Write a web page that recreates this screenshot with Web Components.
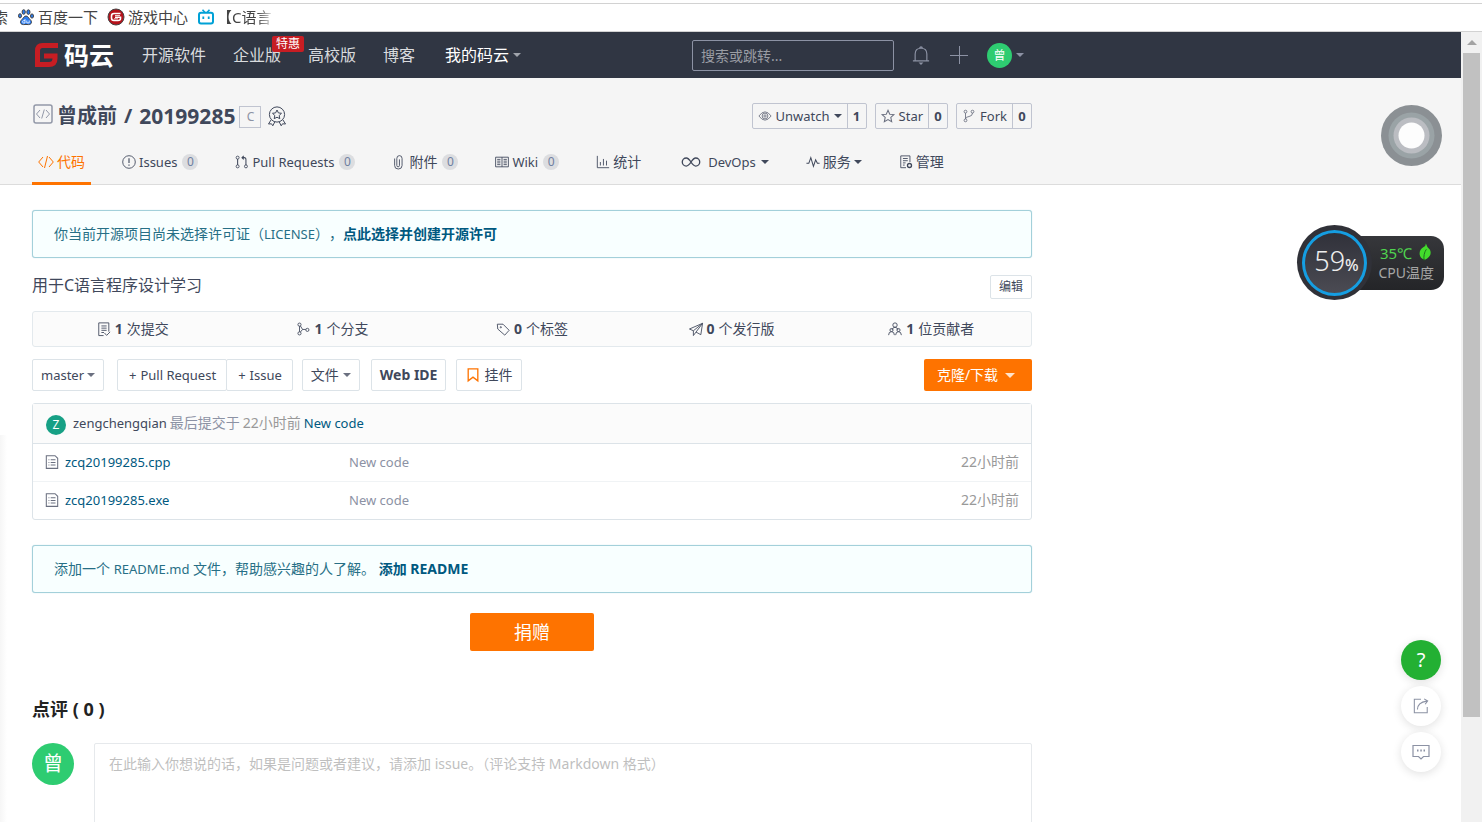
<!DOCTYPE html>
<html lang="zh-CN">
<head>
<meta charset="utf-8">
<title>曾成前/20199285 - 码云</title>
<style>
html, body { margin: 0; height: 100%; }
body {
  overflow: hidden;
  background: #fff;
  color: #40485b;
  font: 14px/20px "Noto Sans", "Noto Sans CJK SC", sans-serif;
  --ink: #40485b;
  --muted: #8c92a4;
  --line: #dce3e8;
  --orange: #fe7300;
  --link: #005980;
}
</style>
</head>
<body>
<browser-frame>
  <site-nav></site-nav>
  <repo-header></repo-header>
  <repo-main></repo-main>
</browser-frame>

<script>
const base = `
*{box-sizing:border-box}
:host{display:block;box-sizing:border-box}
a{color:inherit;text-decoration:none}
button,input,textarea,select{font:inherit;color:inherit;margin:0;border-radius:2px}
button{cursor:pointer;white-space:nowrap}
.en{font-size:13px}
.caret{flex:none;display:inline-block;width:0;height:0;border:4px solid transparent;border-top-color:currentColor;border-bottom:0}
`;
function define(name, css, html) {
  customElements.define(name, class extends HTMLElement {
    constructor() {
      super();
      this.attachShadow({ mode: 'open' }).innerHTML = `<style>${base}${css}</style>${html}`;
    }
  });
}

const icons = {
  logo: [24, '<path d="M24 2.500H8.500Q3.500 2.500 3.500 8v13.500H15q6 0 6-6V13H10" fill="none" stroke="#c71d23" stroke-width="5"/>'],
  paw: [16, '<g fill="#2b7cf0"><ellipse cx="5.700" cy="3" rx="1.600" ry="2.300"/><ellipse cx="10.400" cy="3.100" rx="1.600" ry="2.300"/><ellipse cx="2" cy="6.800" rx="1.500" ry="2.100"/><ellipse cx="14" cy="7" rx="1.500" ry="2.100"/><path d="M8 7c2 0 2.400 2 4 3.400 3 2.600 1 5.400-1.500 5.200-1.700-.2-3.300-.2-5 0C3 15.800 1 13 4 10.400 5.600 9 6 7 8 7z"/></g><path d="M7 10v4H5.600q-1 0-1-1.200t1-1.200H7M8.800 11.500v2.400h2.400v-2.400" fill="none" stroke="#fff" stroke-width=".8"/>'],
  game: [16, '<circle cx="8" cy="8" r="8" fill="#b5121b"/><path d="M12.500 4.500H6Q3.500 4.500 3.500 7v2Q3.500 11.500 6 11.500h4q2.500 0 2.500-2V8.200H7" fill="none" stroke="#fff" stroke-width="1.600"/><path d="M7 6.500h5M6 9.800h4" stroke="#fff" stroke-width=".8"/>'],
  tv: [16, '<path d="M4.500.8 7 3.500M11.500.8 9 3.500" stroke="#00a1d6" stroke-width="1.600"/><rect x="1" y="3.800" width="14" height="10.700" rx="2" fill="none" stroke="#00a1d6" stroke-width="2"/><path d="M5.300 7.500v2.500M10.700 7.500v2.500" stroke="#00a1d6" stroke-width="1.800"/>'],
  bell: [20, '<path d="M1 16.500h18M3.500 16.500V9q0-6.500 6.500-6.500T16.500 9v7.500M8.500 2.500a1.500 1.500 0 0 1 3 0" stroke-width="1.300"/><path d="M7.300 18.300h5.400L10 21z" fill="currentColor" stroke="none"/>'],
  plus: [18, '<path d="M9.500 0v18M0 9.500h18"/>'],
  repo: [20, '<rect x="1" y="1" width="18" height="18" rx="2" stroke-width="1.500"/><path d="m7 6-3.500 4L7 14M13 6l3.500 4-3.500 4M11.300 5.500l-2.600 9"/>'],
  medal: [20, '<circle cx="10" cy="8.500" r="7.600"/><path d="m10 4 1.400 2.900 3.100.4-2.300 2.200.6 3.200L10 11.200l-2.800 1.500.6-3.200-2.300-2.200 3.100-.4zM4 14l-2.500 4 3-.2 1.300 2 2-4M16 14l2.500 4-3-.2-1.300 2-2-4"/>'],
  eye: [16, '<path d="M1 8q7-9.500 14 0-7 9.500-14 0z"/><circle cx="8" cy="8" r="3.300"/><circle cx="8" cy="8" r="1.300"/>'],
  star: [16, '<path d="m8 1.500 2 4.400 4.700.5-3.500 3.200 1 4.800L8 12l-4.200 2.400 1-4.800L1.300 6.400 6 5.900z" stroke-width="1.200"/>'],
  fork: [16, '<circle cx="4" cy="3" r="1.600"/><circle cx="4" cy="13" r="1.600"/><circle cx="12" cy="3" r="1.600"/><path d="M4 4.600v6.800M12 4.600q0 3.400-4 4-4 .4-4 2.800"/>'],
  code: [16, '<path d="m5 3-4.300 5L5 13M11 3l4.300 5-4.300 5M9.500 2l-3 12"/>'],
  issue: [16, '<circle cx="8" cy="8" r="7.200"/><path d="M8 3.800v5.400M8 10.800v1.500" stroke-width="1.300"/>'],
  pull: [16, '<circle cx="3" cy="3" r="1.700"/><circle cx="3" cy="13" r="1.700"/><circle cx="12.500" cy="13" r="1.700"/><path d="M3 4.700v6.600M12.500 11.300V5q0-2-2-2H8m2-2L8 3l2 2" stroke-width="1.200"/>'],
  clip: [16, '<path d="M8.500 5v7q0 1.500-1.500 1.500T5.500 12V4q0-3.300 3-3.300t3 3.300v8q0 4-4.300 4T3 12V4"/>'],
  book: [16, '<path d="M.7 2.500h14.600v11H.7zM8 2.500v11M2.500 5h3.700M2.500 7h3.700M2.500 9h3.700M2.500 11h3.700M9.800 5h3.700M9.800 7h3.700M9.800 9h3.700M9.800 11h3.700"/>'],
  chart: [16, '<path d="M1.500 1v13.500H15M5 12V8M8.500 12V4.500M12 12V6.500"/>'],
  loop: [20, '<path d="M10 10C7 5.500 5.500 5.500 4.800 5.500a4.500 4.500 0 0 0 0 9C7 14.500 8 13 10 10s3-4.500 5.200-4.500a4.500 4.500 0 0 1 0 9C13 14.500 12 13 10 10z" stroke-width="1.500"/>'],
  pulse: [16, '<path d="M.5 9.500h2.700L5.500 3l3 10L11 5.500l2 4h2.500" stroke-width="1.200"/>'],
  manage: [16, '<path d="M8 14.500H2V1h10.500v7M4.500 4h5.500M4.500 6.500h5.500M4.500 9h3M4.500 11.500h2"/><circle cx="12" cy="12" r="2.300" stroke-width="1.500"/>'],
  commits: [16, '<path d="M7.500 15.500H2V1h11.500V11M5 4.500h6M5 7h6M5 9.500h6M5 12h3M8.500 12.500l2.500 2.800 4-4"/>'],
  branch: [16, '<circle cx="4" cy="3" r="1.800"/><circle cx="4" cy="13" r="1.800"/><circle cx="13" cy="9" r="1.800"/><path d="M4 4.800v6.400M5 4.500l2.500 4h3.700M7.500 8.500 5 11.500"/>'],
  tag: [16, '<path d="M1.500 2.500h6.500l7 7-5 5.500-8-7z"/><circle cx="5.500" cy="6" r=".7"/>'],
  plane: [16, '<path d="M15.500 1.500.5 8 5 10zM15.500 1.500l-2 13-5.500-3zM5 10v5.500L8 11.500"/>'],
  people: [16, '<circle cx="8" cy="3.500" r="2.500"/><path d="M4.500 9q1-3 3.500-3t3.500 3M.7 15q0-4 3.300-4t3.300 4M8.700 15Q9 11 12 11t3.300 4"/><circle cx="4" cy="9.200" r="1.800"/><circle cx="12" cy="9.200" r="1.800"/>'],
  mark: [16, '<path d="M2.500 1h11v13.700L8 10.500l-5.500 4.200z" stroke-width="1.500"/>'],
  file: [16, '<path d="M1.500.8h10l3 3v11.500h-13zM6.500 5.500H12M6.500 8.500H12M6.500 11.500H12M4 5.500h1M4 8.500h1M4 11.500h1" stroke-width="1.200"/>'],
  share: [18, '<path d="M9 1.500H1.500v15h14.500V10M5 13q0-8 10.500-9.500M12.500 1l4 2.300-2.800 3.700" stroke-width="1.200"/>'],
  chat: [18, '<path d="M1 2.500h16v11h-5.500l-2.500 2.500-2.500-2.500H1z" stroke-width="1.200"/><path d="M5 7.500h1.500M8.300 7.500h1.500M11.500 7.500H13" stroke-width="1.800"/>'],
  leaf: [20, '<path d="M11 .5q1 4 4.500 7 3 7-5.500 11-6-1-6-7Q4 7 8.500 4.500 11 3 11 .5z" fill="#43dc2c" stroke="none"/><path d="M11.500 7Q8 12 9 19.500" stroke="#17651b"/>']
};
customElements.define('line-icon', class extends HTMLElement {
  connectedCallback() {
    if (this.shadowRoot) return;
    const [box, art] = icons[this.getAttribute('name')];
    const size = this.getAttribute('size') || 16;
    this.attachShadow({ mode: 'open' }).innerHTML = `
      <style>:host{display:inline-block;flex:none;width:${size}px;height:${size}px}svg{display:block;overflow:visible}</style>
      <svg width="${size}" height="${size}" viewBox="0 0 ${box} ${box}" fill="none" stroke="currentColor" stroke-width="1" aria-hidden="true">${art}</svg>`;
  }
});

define('bookmark-bar', `
:host{height:32px;padding-top:3px;overflow:hidden;background:#fff}
nav{display:flex;align-items:center;height:29px;padding-bottom:1px;border-top:1px solid #d2d2d2;border-bottom:1px solid #d2d2d2;color:#444;font-size:15px;white-space:nowrap}
a{display:flex;align-items:center;gap:4px;margin-right:10px}
a:first-child{width:8px;justify-content:flex-end}
a:last-child{gap:3px}
.fade{width:58px;overflow:hidden;-webkit-mask-image:linear-gradient(90deg,#000 70%,transparent)}
`, `<nav aria-label="书签">
<a href="#">索</a>
<a href="#"><line-icon name="paw"></line-icon>百度一下</a>
<a href="#"><line-icon name="game"></line-icon>游戏中心</a>
<a href="#"><line-icon name="tv"></line-icon><span class="fade">【C语言</span></a></nav>`);

define('browser-frame', `
:host{display:flex;flex-direction:column;height:100vh;position:relative}
.view{flex:1;min-height:0;display:flex}
.page{flex:1;min-width:0;overflow:hidden}
.bar{width:21px;background:#f1f1f1;padding:0 2px;display:flex;flex-direction:column;align-items:center}
.up{height:21px;display:flex;align-items:center}
.up i{border:5px solid transparent;border-bottom-color:#a3a3a3;border-top:0}
.thumb{width:17px;height:84%;background:#c1c1c1}
.edge{position:absolute;left:0;top:435px;bottom:0;width:7px;background:linear-gradient(90deg,#f6f6f6,#fff)}
cpu-meter,focus-ring,side-tools{position:absolute}
focus-ring{right:40px;top:105px}
cpu-meter{right:38px;top:225px}
side-tools{right:41px;top:640px}
`, `<bookmark-bar></bookmark-bar>
<div class="view"><div class="page"><slot></slot></div>
<div class="bar"><div class="up"><i></i></div><div class="thumb"></div></div></div>
<div class="edge"></div><focus-ring></focus-ring><cpu-meter></cpu-meter><side-tools></side-tools>`);

define('focus-ring', ``, `<svg width="61" height="61" viewBox="0 0 61 61" style="display:block" aria-hidden="true">
<circle cx="30.500" cy="30.500" r="30.500" fill="#8b9094"/><circle cx="30.500" cy="30.500" r="23" fill="#9aa3a6"/><circle cx="30.500" cy="30.500" r="18" fill="#bbbdc2"/><circle cx="30.500" cy="30.500" r="13" fill="#fdfdfd"/></svg>`);

define('cpu-meter', `
:host{display:flex;align-items:center}
.dial{position:relative;z-index:1;display:flex;align-items:center;justify-content:center;width:75px;height:75px;border-radius:50%;background:#303138;padding:5px}
.ring{display:flex;align-items:baseline;justify-content:center;width:66px;height:66px;padding-left:4px;border:3px solid #159ee2;border-radius:50%;background:linear-gradient(#30313a,#4b4b53);color:#eee;font-size:27px;line-height:56px;font-weight:300}
.ring small{font-size:16px;font-weight:500}
.info{margin-left:-20px;width:92px;height:54px;border-radius:0 13px 13px 0;background:linear-gradient(#36373b,#242528);padding:7px 10px 0 0;display:flex;flex-direction:column;align-items:flex-end;color:#a6a6a6;line-height:20px}
.temp{display:flex;gap:4px;color:#4fd44f;font-size:15px}
`, `<div class="dial"><div class="ring">59<small>%</small></div></div>
<div class="info"><span class="temp">35℃<line-icon name="leaf" size="18"></line-icon></span><span>CPU温度</span></div>`);

define('side-tools', `
:host{display:flex;flex-direction:column;gap:6px}
button{display:flex;align-items:center;justify-content:center;width:40px;height:40px;padding:0;border:0;border-radius:50%;background:#fff;color:#8c92a4;box-shadow:0 2px 10px rgba(0,0,0,.12)}
.help{background:#23b033;color:#fff;font-size:20px}
`, `<button class="help">?</button>
<button aria-label="分享"><line-icon name="share"></line-icon></button>
<button aria-label="反馈"><line-icon name="chat" size="18"></line-icon></button>`);

define('site-nav', `
:host{background:#303643;color:#d9dbde}
.in{display:flex;align-items:center;max-width:1064px;height:46px;padding:0 40px 0 34px;font-size:16px}
.logo{display:flex;align-items:center;gap:6px;color:#fff;font-size:25px;font-weight:700;line-height:46px;margin-right:28px}
nav{display:flex;gap:27px;white-space:nowrap}
nav a{position:relative;line-height:46px}
.mine{display:flex;align-items:center;gap:4px;color:#fff;margin-left:3px}
.mine .caret{color:#a0a4ac}
.hot{position:absolute;left:39px;top:4px;width:32px;height:16px;border-radius:2px;background:#c71d23;color:#fff;font-size:12px;line-height:16px;text-align:center}
input{width:202px;height:31px;margin-left:auto;padding:0 8px;border:1px solid #8c92a4;background:transparent;font-size:14px;outline:0}
input::placeholder{color:#9a9da4;opacity:1}
button{display:flex;align-items:center;border:0;background:none;padding:0;color:#8c92a4}
.bell{margin-left:18px}.plus{margin-left:20px}
.me{margin-left:19px;gap:4px}
.me b{width:25px;height:25px;border-radius:50%;background:#2ecc71;color:#fff;font-size:12px;line-height:25px;font-weight:400}
`, `<div class="in"><a class="logo" href="#"><line-icon name="logo" size="24"></line-icon>码云</a>
<nav><a href="#">开源软件</a><a href="#">企业版<span class="hot">特惠</span></a><a href="#">高校版</a><a href="#">博客</a><a class="mine" href="#">我的码云<i class="caret"></i></a></nav>
<input type="text" placeholder="搜索或跳转..." aria-label="搜索或跳转">
<button class="bell" aria-label="通知"><line-icon name="bell" size="18"></line-icon></button>
<button class="plus" aria-label="新建"><line-icon name="plus" size="18"></line-icon></button>
<button class="me"><b>曾</b><i class="caret"></i></button></div>`);

define('count-button', `
:host{display:flex;height:26px;border:1px solid #c0c4d0;border-radius:2px;line-height:24px;font-size:13px}
button{display:flex;align-items:center;gap:4px;border:0;background:none;padding:0 5px}
a{width:19px;border-left:1px solid #c0c4d0;text-align:center;font-weight:700}
`, `<button><slot></slot></button><a href="#"><slot name="count"></slot></a>`);

define('repo-tab', `
:host([active]){--tab:var(--orange)}
a{display:flex;align-items:center;gap:3px;height:45px;padding:2px 6px 0;border-bottom:3px solid transparent;color:var(--tab,var(--ink));white-space:nowrap}
:host([active]) a{border-color:var(--orange)}
`, `<a href="#"><slot></slot></a>`);

define('repo-header', `
:host{background:#f5f5f5;border-bottom:1px solid #dcdcdc}
.in{max-width:1064px;padding:0 32px}
.top{display:flex;align-items:center;height:62px;padding-top:14px}
h1{display:flex;align-items:center;margin:0;font-size:20px;line-height:26px}
h1 line-icon{margin:0 4px 5px 1px;color:#9298a8}
.slash{margin:0 7px}
.num{font-size:21px}
.lang{width:22px;height:22px;margin:2px 6px 0 4px;border:1px solid #c0c4d0;color:#8c92a4;font-size:12px;line-height:20px;text-align:center}
.acts{display:flex;gap:8px;margin-left:auto}
.acts line-icon{color:#6b7080}
.tabs{display:flex;gap:25px;margin-bottom:-1px}
.n{min-width:16px;height:16px;margin-left:2px;border-radius:8px;background:#dcdde0;color:#7080a0;font-size:12px;line-height:16px;text-align:center}
.ops{margin:0 2px 0 5px}
.loop{margin-left:4px}
`, `<div class="in"><div class="top"><h1><line-icon name="repo" size="20"></line-icon><a href="#">曾成前</a><span class="slash">/</span><a class="num" href="#">20199285</a></h1>
<span class="lang">C</span><line-icon name="medal" size="20"></line-icon>
<div class="acts"><count-button><line-icon name="eye" size="14"></line-icon><span>Unwatch</span><i class="caret"></i><span slot="count">1</span></count-button>
<count-button><line-icon name="star" size="14"></line-icon><span>Star</span><span slot="count">0</span></count-button>
<count-button><line-icon name="fork" size="14"></line-icon><span>Fork</span><span slot="count">0</span></count-button></div></div>
<nav class="tabs">
<repo-tab active><line-icon name="code" size="16"></line-icon>代码</repo-tab>
<repo-tab><line-icon name="issue" size="14"></line-icon><span class="en">Issues</span><span class="n">0</span></repo-tab>
<repo-tab><line-icon name="pull" size="14"></line-icon><span class="en">Pull Requests</span><span class="n">0</span></repo-tab>
<repo-tab><line-icon name="clip" size="14"></line-icon>附件<span class="n">0</span></repo-tab>
<repo-tab><line-icon name="book" size="14"></line-icon><span class="en">Wiki</span><span class="n">0</span></repo-tab>
<repo-tab><line-icon name="chart" size="14"></line-icon>统计</repo-tab>
<repo-tab><line-icon class="loop" name="loop" size="18"></line-icon><span class="en ops">DevOps</span><i class="caret"></i></repo-tab>
<repo-tab><line-icon name="pulse" size="14"></line-icon>服务<i class="caret"></i></repo-tab>
<repo-tab><line-icon name="manage" size="14"></line-icon>管理</repo-tab>
</nav></div>`);

define('notice-box', `
:host{padding:13px 21px;border:1px solid #a3d0da;border-radius:3px;box-shadow:0 0 1px #a3d0da;background:#f8ffff;color:#276f86;text-spacing-trim:space-all}
`, `<slot></slot>`);

define('stat-item', `
:host{flex:1}
a{display:flex;align-items:center;justify-content:center;gap:4px;line-height:34px}
`, `<a href="#"><slot></slot></a>`);

define('tool-bar', `
:host{display:flex;height:32px}
button,label{display:flex;align-items:center;justify-content:center;gap:4px;height:32px;padding:0 8px;border:1px solid var(--line);border-radius:2px;background:#fff}
label{gap:2px;margin-right:13px}
select{appearance:none;border:0;background:none;padding:0;outline:0}
.caret{color:#6b7080}
.g{display:flex}.g button{padding:0 10px 0 11px}.g button+button{margin-left:-1px}
.file{margin:0 11px 0 9px}.ide{font-weight:700;margin-right:10px}
.widget{padding:0 9px}
.widget line-icon{color:var(--orange)}
.clone{width:108px;margin-left:auto;padding-right:12px;border:0;gap:7px;background:var(--orange);color:#fff}
.clone .caret{border-width:5px 5px 0;color:#ffe3cc}
`, `<label aria-label="分支"><select class="en"><option>master</option></select><i class="caret"></i></label>
<div class="g"><button class="en"><span>+</span>Pull Request</button><button class="en"><span>+</span>Issue</button></div>
<button class="file">文件<i class="caret"></i></button><button class="ide">Web IDE</button>
<button class="widget"><line-icon name="mark" size="14"></line-icon>挂件</button>
<button class="clone">克隆/下载<i class="caret"></i></button>`);

define('file-table', `
:host{border:1px solid var(--line);border-radius:3px}
table{width:100%;border-collapse:collapse;table-layout:fixed}
th,td{height:38px;padding:0 12px;font-weight:400;text-align:left;color:var(--muted)}
th{height:39px;background:#fbfbfb;border-bottom:1px solid var(--line)}
tr+tr td{border-top:1px solid #f0f3f5}
.row{display:flex;align-items:center;gap:3px}
.av{width:20px;height:20px;margin:3px 4px 0 1px;border-radius:50%;background:#17a085;color:#fff;font-size:12px;line-height:20px;text-align:center}
.user{color:var(--ink)}.link{color:var(--link)}
td .row{gap:6px}td line-icon{color:#6b7080}
.name{width:304px}.time{width:120px}
td:last-child{text-align:right;color:#999}
.ago{color:#999}
`, `<table><colgroup><col class="name"><col><col class="time"></colgroup>
<thead><tr><th colspan="3"><div class="row"><span class="av">Z</span><a class="user en" href="#">zengchengqian</a><span>最后提交于</span><span class="ago">22小时前</span><a class="link en" href="#">New code</a></div></th></tr></thead>
<tbody><tr><td><div class="row"><line-icon name="file" size="14"></line-icon><a class="link en" href="#">zcq20199285.cpp</a></div></td><td class="en">New code</td><td>22小时前</td></tr>
<tr><td><div class="row"><line-icon name="file" size="14"></line-icon><a class="link en" href="#">zcq20199285.exe</a></div></td><td class="en">New code</td><td>22小时前</td></tr></tbody></table>`);

define('comment-form', `
h2{margin:0 0 22px;font-size:18px;line-height:24px;color:#222}
.row{display:flex;gap:20px}
.av{flex:none;width:42px;height:42px;border-radius:50%;background:#2ecc71;color:#fff;font-size:20px;line-height:42px;text-align:center}
textarea{flex:1;height:120px;padding:10px 14px;border:1px solid #e6e9ec;resize:none;outline:0}
textarea::placeholder{color:#bfbfbf;opacity:1}
`, `<h2>点评 ( 0 )</h2><div class="row"><span class="av">曾</span><textarea aria-label="评论" placeholder="在此输入你想说的话，如果是问题或者建议，请添加 issue。（评论支持 Markdown 格式）"></textarea></div>`);

define('repo-main', `
:host{max-width:1064px;padding:25px 32px 0}
notice-box a{color:#005980;font-weight:700}
.desc{display:flex;justify-content:space-between;align-items:flex-start;margin:15px 0 12px;font-size:16px;line-height:24px}
.edit{width:42px;height:24px;padding:0;border:1px solid var(--line);background:#fff;font-size:12px;line-height:20px;margin-top:2px}
.stats{display:flex;border:1px solid #e3e9ed;border-radius:3px;background:#fbfbfb;margin-bottom:12px}
file-table{margin:12px 0 25px}
.give{display:block;width:124px;height:38px;margin:20px auto 46px;border:0;background:var(--orange);color:#fff;font-size:18px}
`, `<notice-box>你当前开源项目尚未选择许可证（<span class="en">LICENSE</span>），<a href="#">点此选择并创建开源许可</a></notice-box>
<div class="desc"><span>用于C语言程序设计学习</span><button class="edit">编辑</button></div>
<div class="stats">
<stat-item><line-icon name="commits" size="14"></line-icon><b>1</b>次提交</stat-item>
<stat-item><line-icon name="branch" size="14"></line-icon><b>1</b>个分支</stat-item>
<stat-item><line-icon name="tag" size="14"></line-icon><b>0</b>个标签</stat-item>
<stat-item><line-icon name="plane" size="14"></line-icon><b>0</b>个发行版</stat-item>
<stat-item><line-icon name="people" size="14"></line-icon><b>1</b>位贡献者</stat-item></div>
<tool-bar></tool-bar><file-table></file-table>
<notice-box>添加一个 <span class="en">README.md</span> 文件，帮助感兴趣的人了解。 <a href="#">添加 README</a></notice-box>
<button class="give">捐赠</button><comment-form></comment-form>`);
</script>
</body>
</html>
